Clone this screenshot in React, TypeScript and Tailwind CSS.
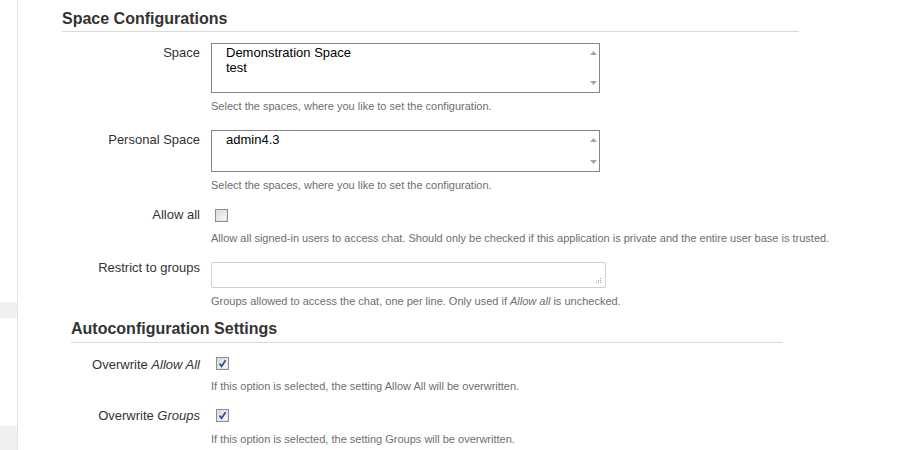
import React from "react";

const Arrow = ({ down }: { down?: boolean }) => (
    <svg width="7" height="4" viewBox="0 0 7 4">
        <path d={down ? "M0 0 L7 0 L3.5 4 Z" : "M0 4 L7 4 L3.5 0 Z"} fill="#a6a6a6"/>
    </svg>
);

const ListBox = ({ items, height }: { items: string[]; height: string }) => (
    <div className={"flex w-[389px] border border-[#858585] bg-white " + height}>
        <div className="flex-1 pl-[14px] pt-[1px] text-[13px] leading-[15px] text-black">
            {items.map((item) => <div key={item}>{item}</div>)}
        </div>
        <div className="flex w-[11px] flex-col items-center justify-between py-[7px]">
            <Arrow/>
            <Arrow down/>
        </div>
    </div>
);

const Checkbox = ({ checked }: { checked?: boolean }) => (
    <span className="flex h-[13px] w-[13px] items-center justify-center border border-[#8e8e8e] bg-white">
        <span className="flex h-[11px] w-[11px] items-center justify-center border border-[#e2e2e2] bg-linear-to-br from-[#d9d9d9] to-[#fafafa]">
            {checked && (
                <svg width="9" height="9" viewBox="0 0 9 9">
                    <path d="M1.5 4.6 L3.6 7.2 L7.6 1.3" fill="none" stroke="#2c4aa6" strokeWidth="1.7"/>
                </svg>
            )}
        </span>
    </span>
);

const Help = ({ children, className }: { children: React.ReactNode; className: string }) => (
    <div className={"whitespace-nowrap text-[11px] leading-[13px] text-[#6e6e6e] " + className}>{children}</div>
);

const Label = ({ children, className }: { children: React.ReactNode; className?: string }) => (
    <div className={"text-right text-[13px] leading-[15px] text-[#333] " + (className ?? "")}>{children}</div>
);

const App: React.FC = () => {
    return (
        <div className="flex h-[450px] w-[920px] overflow-hidden bg-white font-['Liberation_Sans',Arial,sans-serif]">
            <div className="flex w-[18px] flex-col border-r border-[#e6e6e6]">
                <div className="h-[302px]"/>
                <div className="h-[16px] bg-[#efefef]"/>
                <div className="h-[108px]"/>
                <div className="flex-1 bg-[#efefef]"/>
            </div>

            <div className="ml-[44px] w-[737px]">
                <h2 className="mt-[9px] border-b border-[#d9d9d9] pb-[2px] text-[16px] font-bold leading-[20px] text-[#333]">
                    Space Configurations
                </h2>

                <div className="mt-[11px] grid grid-cols-[138px_1fr] gap-x-[11px]">
                    <Label className="pt-[2px]">Space</Label>
                    <div>
                        <ListBox items={["Demonstration Space", "test"]} height="h-[50px]"/>
                        <Help className="mt-[7px]">Select the spaces, where you like to set the configuration.</Help>
                    </div>
                </div>

                <div className="mt-[17px] grid grid-cols-[138px_1fr] gap-x-[11px]">
                    <Label className="pt-[2px]">Personal Space</Label>
                    <div>
                        <ListBox items={["admin4.3"]} height="h-[42px]"/>
                        <Help className="mt-[7px]">Select the spaces, where you like to set the configuration.</Help>
                    </div>
                </div>

                <div className="mt-[15px] grid grid-cols-[138px_1fr] gap-x-[11px]">
                    <Label>Allow all</Label>
                    <div>
                        <div className="ml-[4px] mt-[2px]">
                            <Checkbox/>
                        </div>
                        <Help className="mt-[10px]">
                            Allow all signed-in users to access chat. Should only be checked if this application is private and the entire user base is trusted.
                        </Help>
                    </div>
                </div>

                <div className="mt-[15px] grid grid-cols-[138px_1fr] gap-x-[11px]">
                    <Label>Restrict to groups</Label>
                    <div>
                        <div className="mt-[2px] flex h-[26px] w-[395px] items-end justify-end rounded-[2px] border border-[#d0d0d0] bg-white pb-[3px] pr-[3px]">
                            <svg width="6" height="6" viewBox="0 0 6 6">
                                <rect x="4" y="0" width="1" height="1" fill="#9a9a9a"/>
                                <rect x="2" y="2" width="1" height="1" fill="#9a9a9a"/>
                                <rect x="4" y="2" width="1" height="1" fill="#9a9a9a"/>
                                <rect x="0" y="4" width="1" height="1" fill="#9a9a9a"/>
                                <rect x="2" y="4" width="1" height="1" fill="#9a9a9a"/>
                                <rect x="4" y="4" width="1" height="1" fill="#9a9a9a"/>
                            </svg>
                        </div>
                        <Help className="mt-[7px]">
                            Groups allowed to access the chat, one per line. Only used if <i>Allow all</i> is unchecked.
                        </Help>
                    </div>
                </div>

                <h2 className="ml-[9px] mt-[11px] w-[712px] border-b border-[#d9d9d9] pb-[3px] text-[16px] font-bold leading-[20px] text-[#333]">
                    Autoconfiguration Settings
                </h2>

                <div className="mt-[14px] grid grid-cols-[138px_1fr] gap-x-[11px]">
                    <Label>Overwrite <i>Allow All</i></Label>
                    <div>
                        <div className="ml-[5px]">
                            <Checkbox checked/>
                        </div>
                        <Help className="mt-[10px]">If this option is selected, the setting Allow All will be overwritten.</Help>
                    </div>
                </div>

                <div className="mt-[15px] grid grid-cols-[138px_1fr] gap-x-[11px]">
                    <Label>Overwrite <i>Groups</i></Label>
                    <div>
                        <div className="ml-[5px] mt-[1px]">
                            <Checkbox checked/>
                        </div>
                        <Help className="mt-[11px]">If this option is selected, the setting Groups will be overwritten.</Help>
                    </div>
                </div>
            </div>
        </div>
    );
};

export default App;
